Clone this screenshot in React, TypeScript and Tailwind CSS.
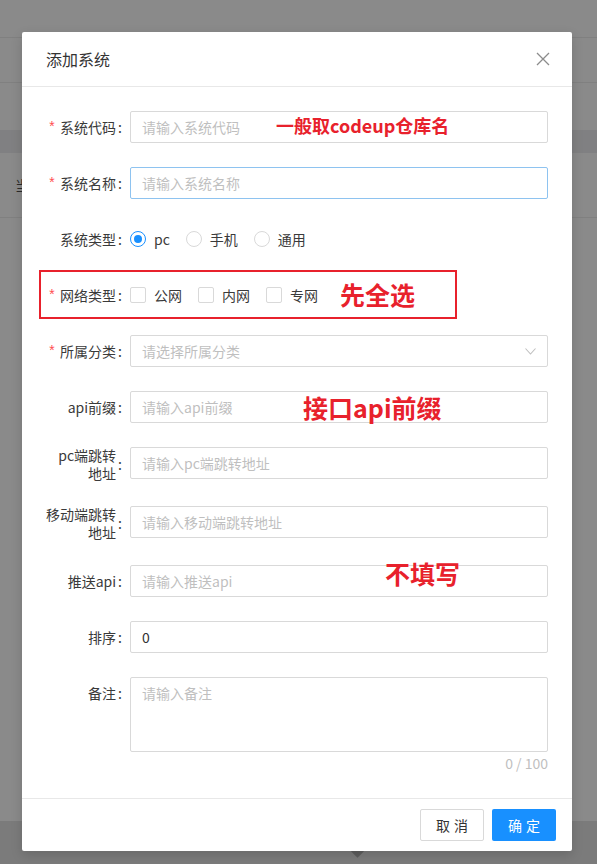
import React from "react";

type Row = {
  label: string[];
  required?: boolean;
  kind: "input" | "radio" | "check" | "select" | "textarea";
  placeholder?: string;
  value?: string;
  focused?: boolean;
};

const rows: Row[] = [
  { label: ["系统代码"], required: true, kind: "input", placeholder: "请输入系统代码" },
  { label: ["系统名称"], required: true, kind: "input", placeholder: "请输入系统名称", focused: true },
  { label: ["系统类型"], kind: "radio" },
  { label: ["网络类型"], required: true, kind: "check" },
  { label: ["所属分类"], required: true, kind: "select", placeholder: "请选择所属分类" },
  { label: ["api前缀"], kind: "input", placeholder: "请输入api前缀" },
  { label: ["pc端跳转", "地址"], kind: "input", placeholder: "请输入pc端跳转地址" },
  { label: ["移动端跳转", "地址"], kind: "input", placeholder: "请输入移动端跳转地址" },
  { label: ["推送api"], kind: "input", placeholder: "请输入推送api" },
  { label: ["排序"], kind: "input", value: "0" },
  { label: ["备注"], kind: "textarea", placeholder: "请输入备注" },
];

function Label({ row }: { row: Row }) {
  const twoLines = row.label.length > 1;
  return (
    <div
      className={`w-[84px] shrink-0 flex justify-end items-center text-[14px] text-[#3a3a3a] ${
        twoLines ? "leading-[17.5px]" : "h-8 leading-8"
      }`}
    >
      {row.required && (
        <span className="mr-1 text-[#ff4d4f] text-[14px] font-['Liberation_Mono',monospace] translate-y-[1px]">
          *
        </span>
      )}
      <span className="text-right whitespace-nowrap">
        {row.label.map((l, i) => (
          <div key={i}>{l}</div>
        ))}
      </span>
      <span className="ml-[2px] mr-2">:</span>
    </div>
  );
}

function Radio({ label, checked }: { label: string; checked?: boolean }) {
  return (
    <span className="mr-2 flex items-center">
      <span
        className={`w-4 h-4 rounded-full border flex items-center justify-center bg-white ${
          checked ? "border-[#1890ff]" : "border-[#d9d9d9]"
        }`}
      >
        {checked && <span className="w-2 h-2 rounded-full bg-[#1890ff]" />}
      </span>
      <span className="px-2 text-[#3a3a3a]">{label}</span>
    </span>
  );
}

function Check({ label }: { label: string }) {
  return (
    <span className="mr-2 flex items-center">
      <span className="w-4 h-4 rounded-[2px] border border-[#d9d9d9] bg-white" />
      <span className="px-2 text-[#3a3a3a]">{label}</span>
    </span>
  );
}

function Control({ row }: { row: Row }) {
  const box = "w-full h-8 rounded-[2px] border bg-white px-[11px] flex items-center text-[14px]";
  if (row.kind === "radio") {
    return (
      <div className="h-8 flex items-center text-[14px]">
        <Radio label="pc" checked />
        <Radio label="手机" />
        <Radio label="通用" />
      </div>
    );
  }
  if (row.kind === "check") {
    return (
      <div className="h-8 flex items-center text-[14px]">
        <Check label="公网" />
        <Check label="内网" />
        <Check label="专网" />
      </div>
    );
  }
  if (row.kind === "select") {
    return (
      <div className={`${box} border-[#d9d9d9] justify-between`}>
        <span className="text-[#bfbfbf]">{row.placeholder}</span>
        <svg width="11" height="7" viewBox="0 0 11 7" fill="none">
          <path d="M0.5 0.5 L5.5 6 L10.5 0.5" stroke="#bfbfbf" strokeWidth="1.1" />
        </svg>
      </div>
    );
  }
  if (row.kind === "textarea") {
    return (
      <div className="w-full">
        <div className="w-full h-[75px] rounded-[2px] border border-[#d9d9d9] bg-white px-[11px] py-[4px] leading-[22px] text-[14px] text-[#bfbfbf]">
          {row.placeholder}
        </div>
        <div className="text-right text-[14px] leading-[22px] text-[#bfbfbf]">0 / 100</div>
      </div>
    );
  }
  return (
    <div className={`${box} ${row.focused ? "border-[#8ec3f0]" : "border-[#d9d9d9]"}`}>
      {row.value ? (
        <span className="text-[#333]">{row.value}</span>
      ) : (
        <span className="text-[#bfbfbf]">{row.placeholder}</span>
      )}
    </div>
  );
}

export default function App() {
  return (
    <div className="relative w-[597px] h-[864px] overflow-hidden bg-[#8a8a8a] font-['Noto_Sans_CJK_SC','Noto_Sans',sans-serif]">
      {/* dimmed page behind the dialog */}
      <div className="flex flex-col h-full">
        <div className="h-[38px] border-b border-[#808080]" />
        <div className="h-[45px] border-b border-[#808080]" />
        <div className="h-[47px]" />
        <div className="h-[23px] bg-[#808082]" />
        <div className="h-[65px] border-b border-[#808080] pl-[15px] flex items-center text-[14px] text-[#2a2a2a]">
          当前
        </div>
        <div className="flex-1" />
        <div className="h-[43px] bg-[#7b7b7b] pl-[353px] pt-[26px]">
          <div className="w-[9px] h-[9px] rotate-45 bg-[#5e5e5e]" />
        </div>
      </div>

      {/* dialog */}
      <div className="absolute left-[22px] top-[32px] w-[550px] rounded-[2px] bg-white shadow-[0_4px_12px_rgba(0,0,0,0.15)]">
        <div className="flex items-center justify-between px-6 py-4 border-b border-[#e8e8e8]">
          <span className="text-[16px] leading-[22px] text-[#333]">添加系统</span>
          <svg width="14" height="14" viewBox="0 0 14 14" className="mr-[-2px]">
            <path d="M1 1 L13 13 M13 1 L1 13" stroke="#8c8c8c" strokeWidth="1.3" />
          </svg>
        </div>

        <div className="p-6">
          {rows.map((row, i) => (
            <div key={i} className={`flex items-start ${i < rows.length - 1 ? "mb-6" : ""}`}>
              <Label row={row} />
              <div className="flex-1">
                <Control row={row} />
              </div>
            </div>
          ))}
        </div>

        <div className="flex justify-end gap-2 px-4 py-[10px] border-t border-[#e8e8e8]">
          <button className="h-8 w-16 rounded-[2px] border border-[#d9d9d9] bg-white text-[14px] text-[#333] tracking-[4px] pl-1">
            取消
          </button>
          <button className="h-8 w-16 rounded-[2px] bg-[#1890ff] text-[14px] text-white tracking-[4px] pl-1">
            确定
          </button>
        </div>

        {/* red annotations drawn over the screenshot */}
        <div className="absolute left-[17px] top-[238px] w-[418px] h-[49px] border-2 border-[#e8212c]" />
        <div className="absolute left-[254px] top-[84px] text-[18px] leading-[18px] font-bold text-[#e8212c] whitespace-nowrap">
          一般取codeup仓库名
        </div>
        <div className="absolute left-[318px] top-[250px] text-[25px] leading-[25px] font-bold text-[#e8212c] whitespace-nowrap">
          先全选
        </div>
        <div className="absolute left-[281px] top-[363px] text-[25px] leading-[25px] font-bold text-[#e8212c] whitespace-nowrap">
          接口api前缀
        </div>
        <div className="absolute left-[363px] top-[529px] text-[25px] leading-[25px] font-bold text-[#e8212c] whitespace-nowrap">
          不填写
        </div>
      </div>
    </div>
  );
}
